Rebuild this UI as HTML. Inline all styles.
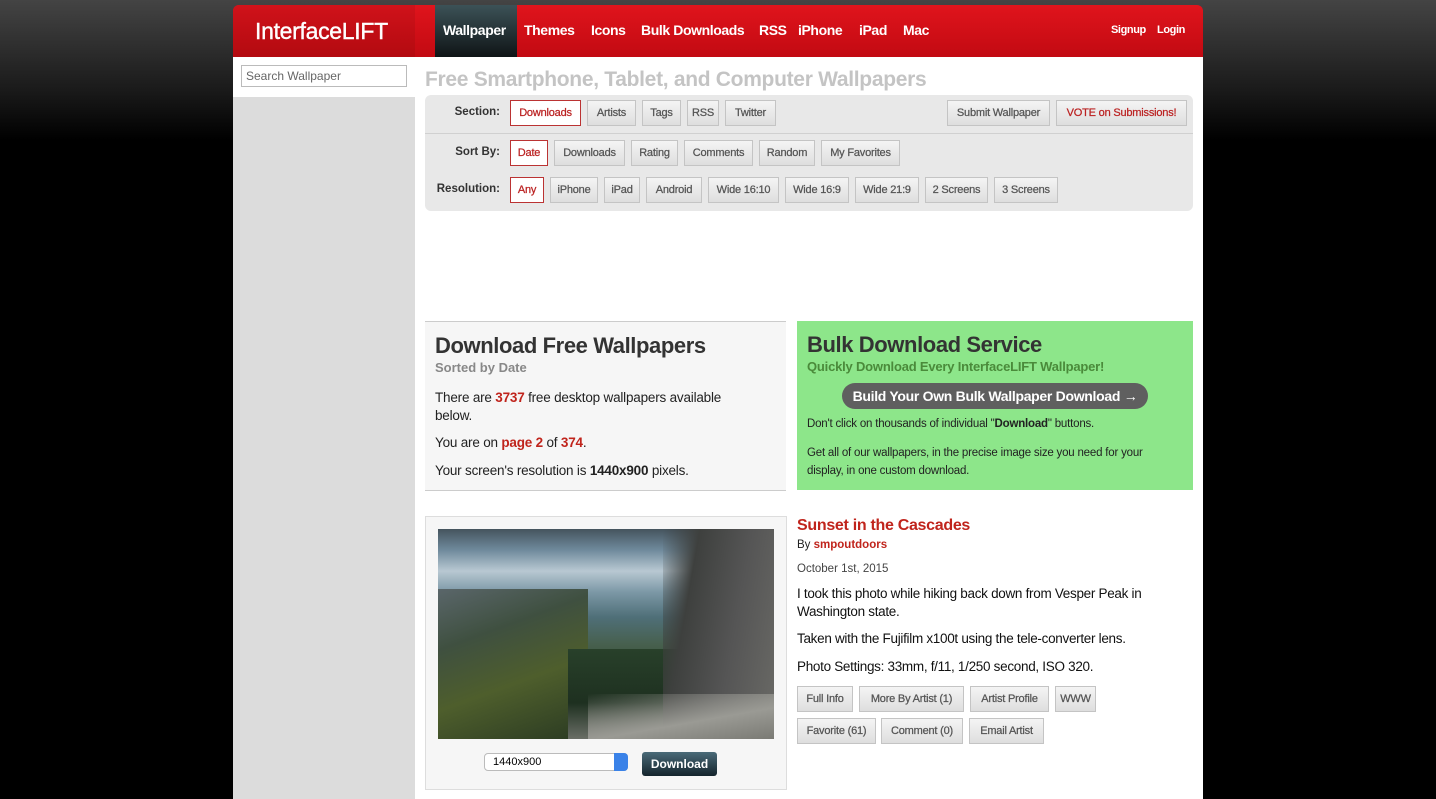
<!DOCTYPE html>
<html><head><meta charset="utf-8"><style>
*{margin:0;padding:0;box-sizing:border-box}
body{width:1436px;height:799px;overflow:hidden;background:linear-gradient(#444 0,#1a1a1a 90px,#000 140px,#000);font-family:"Liberation Sans",sans-serif;position:relative}
.a{position:absolute}
.hdr{left:233px;top:5px;width:970px;height:52px;background:linear-gradient(#e0141c,#c20a12);border-radius:6px 6px 0 0}
.logo{left:0;top:0;width:182px;height:52px;background:linear-gradient(#d0121a,#b30a10);border-radius:6px 0 0 0;color:#fff;font-size:23px;line-height:52px;padding-left:22px;letter-spacing:-.3px;-webkit-text-stroke:.4px #fff}
.nav{color:#fff;font-weight:bold;font-size:14px;top:17px;letter-spacing:-.4px}
.tab{left:202px;top:0;width:82px;height:52px;background:linear-gradient(#3c5257,#0f1416)}
.side{left:233px;top:57px;width:182px;height:742px;background:#dcdcdc}
.sbox{left:233px;top:57px;width:182px;height:40px;background:#fff}
.inp{left:241px;top:65px;width:166px;height:22px;border:1px solid #bbb;font-size:12px;color:#666;padding:3px 4px}
.main{left:415px;top:57px;width:788px;height:742px;background:#fff}
h1.a{left:425px;top:68px;font-size:21px;color:#c4c4c4;font-weight:bold;letter-spacing:-.3px}
.panel{left:425px;top:95px;width:768px;height:116px;background:#e8e8e8;border-radius:6px}
.lbl{font-size:11.5px;font-weight:bold;color:#333;text-align:right;width:80px}
.b{position:absolute;height:26px;border:1px solid #c4c4c4;background:linear-gradient(#f4f4f4,#dedede);font-size:11px;color:#555;text-align:center;line-height:25px;white-space:nowrap;letter-spacing:-.2px;-webkit-text-stroke:.25px #555}
.b.s{background:#fff;border-color:#b33;color:#b22;-webkit-text-stroke:.25px #b22}
.box1{left:425px;top:321px;width:361px;height:170px;background:#f6f6f6;border-top:1px solid #ccc;border-bottom:1px solid #ccc}
.box2{left:797px;top:321px;width:396px;height:169px;background:#8de68a}
.red{color:#c0241c;font-weight:bold}
p{margin:0}
</style></head><body>
<div class="a hdr">
<div class="a logo">InterfaceLIFT</div>
<div class="a tab"></div>
<div class="a nav" style="left:210px">Wallpaper</div>
<div class="a nav" style="left:291px">Themes</div>
<div class="a nav" style="left:358px">Icons</div>
<div class="a nav" style="left:408px">Bulk Downloads</div>
<div class="a nav" style="left:526px">RSS</div>
<div class="a nav" style="left:565px">iPhone</div>
<div class="a nav" style="left:626px">iPad</div>
<div class="a nav" style="left:670px">Mac</div>
<div class="a nav" style="left:878px;top:19px;font-size:11px">Signup</div>
<div class="a nav" style="left:924px;top:19px;font-size:11px">Login</div>
</div>
<div class="a side"></div><div class="a sbox"></div>
<div class="a inp">Search Wallpaper</div>
<div class="a main"></div>
<h1 class="a">Free Smartphone, Tablet, and Computer Wallpapers</h1>
<div class="a panel"><div class="a" style="left:0;top:38px;width:768px;height:1px;background:#d0d0d0"></div></div>
<div class="a lbl" style="left:420px;top:106px">Section:</div>
<div class="a lbl" style="left:420px;top:146px">Sort By:</div>
<div class="a lbl" style="left:420px;top:183px">Resolution:</div>
<div class="b s" style="left:510px;top:100px;width:71px">Downloads</div>
<div class="b" style="left:587px;top:100px;width:49px">Artists</div>
<div class="b" style="left:642px;top:100px;width:39px">Tags</div>
<div class="b" style="left:687px;top:100px;width:32px">RSS</div>
<div class="b" style="left:725px;top:100px;width:51px">Twitter</div>
<div class="b" style="left:947px;top:100px;width:103px">Submit Wallpaper</div>
<div class="b" style="left:1056px;top:100px;width:131px;color:#b22;-webkit-text-stroke:.25px #b22">VOTE on Submissions!</div>
<div class="b s" style="left:510px;top:140px;width:38px">Date</div>
<div class="b" style="left:554px;top:140px;width:71px">Downloads</div>
<div class="b" style="left:631px;top:140px;width:47px">Rating</div>
<div class="b" style="left:684px;top:140px;width:69px">Comments</div>
<div class="b" style="left:759px;top:140px;width:56px">Random</div>
<div class="b" style="left:821px;top:140px;width:79px">My Favorites</div>
<div class="b s" style="left:510px;top:177px;width:34px">Any</div>
<div class="b" style="left:550px;top:177px;width:48px">iPhone</div>
<div class="b" style="left:604px;top:177px;width:36px">iPad</div>
<div class="b" style="left:646px;top:177px;width:56px">Android</div>
<div class="b" style="left:708px;top:177px;width:71px">Wide 16:10</div>
<div class="b" style="left:785px;top:177px;width:64px">Wide 16:9</div>
<div class="b" style="left:855px;top:177px;width:64px">Wide 21:9</div>
<div class="b" style="left:925px;top:177px;width:63px">2 Screens</div>
<div class="b" style="left:994px;top:177px;width:64px">3 Screens</div>

<div class="a box1">
<div class="a" style="left:10px;top:11px;font-size:22px;font-weight:bold;color:#333;letter-spacing:-.4px">Download Free Wallpapers</div>
<div class="a" style="left:10px;top:38px;font-size:13px;font-weight:bold;color:#888">Sorted by Date</div>
<div class="a" style="left:10px;top:67px;width:320px;font-size:13.5px;color:#222;line-height:18px;letter-spacing:-.2px">There are <span class="red">3737</span> free desktop wallpapers available below.</div>
<div class="a" style="left:10px;top:113px;font-size:13.5px;color:#222;letter-spacing:-.2px">You are on <span class="red">page 2</span> of <span class="red">374</span>.</div>
<div class="a" style="left:10px;top:141px;font-size:13.5px;color:#222;letter-spacing:-.2px">Your screen's resolution is <b>1440x900</b> pixels.</div>
</div>
<div class="a box2">
<div class="a" style="left:10px;top:11px;font-size:22px;font-weight:bold;color:#333;letter-spacing:-.4px">Bulk Download Service</div>
<div class="a" style="left:10px;top:38px;font-size:13px;font-weight:bold;color:#4a8a3a;letter-spacing:-.2px">Quickly Download Every InterfaceLIFT Wallpaper!</div>
<div class="a" style="left:45px;top:62px;width:306px;height:26px;border-radius:13px;background:#5f5f5f;color:#fff;font-size:14px;font-weight:bold;text-align:center;line-height:26px;letter-spacing:-.3px">Build Your Own Bulk Wallpaper Download →</div>
<div class="a" style="left:10px;top:97px;font-size:11.5px;color:#222;letter-spacing:-.2px">Don't click on thousands of individual "<b>Download</b>" buttons.</div>
<div class="a" style="left:10px;top:123px;width:372px;font-size:11.5px;color:#222;line-height:18px;letter-spacing:-.2px">Get all of our wallpapers, in the precise image size you need for your display, in one custom download.</div>
</div>

<div class="a" style="left:425px;top:516px;width:362px;height:274px;background:#f6f6f6;border:1px solid #ddd"></div>
<div class="a" style="left:438px;top:529px;width:336px;height:210px;overflow:hidden;background:linear-gradient(#45545e 0%,#6f8a9c 10%,#b8c8d2 20%,#7c98a6 30%,#4f6f78 42%,#47604e 55%,#2e452c 72%,#5c6658 86%,#8e8e86 100%)">
<div class="a" style="left:0;top:60px;width:150px;height:150px;background:linear-gradient(160deg,#5a666a 0%,#3f5040 30%,#4e5e2c 60%,#2a3a22)"></div>
<div class="a" style="left:130px;top:120px;width:110px;height:90px;background:linear-gradient(#28402a,#1e3020 60%,#6a6e66)"></div>
<div class="a" style="left:225px;top:0;width:111px;height:210px;background:linear-gradient(100deg,rgba(60,60,60,0) 0%,#3e403e 25%,#555 60%,#6a6a66)"></div>
<div class="a" style="left:150px;top:165px;width:186px;height:45px;background:linear-gradient(170deg,rgba(140,140,134,0),#9a9a94 60%,#7a7a74)"></div>
</div>
<div class="a" style="left:484px;top:753px;width:144px;height:18px;border:1px solid #bbb;border-radius:4px;background:#fff;font-size:11px;line-height:16px;padding-left:8px">1440x900</div>
<div class="a" style="left:614px;top:753px;width:14px;height:18px;background:#3a82e8;border-radius:0 4px 4px 0"></div>
<div class="a" style="left:642px;top:752px;width:75px;height:24px;border-radius:3px;background:linear-gradient(#4a6a78,#14242c);color:#fff;font-size:12px;font-weight:bold;text-align:center;line-height:24px">Download</div>

<div class="a" style="left:797px;top:517px;font-size:16px;font-weight:bold;color:#c0241c;letter-spacing:-.3px">Sunset in the Cascades</div>
<div class="a" style="left:797px;top:539px;font-size:11.5px;color:#222">By <span class="red">smpoutdoors</span></div>
<div class="a" style="left:797px;top:563px;font-size:11.5px;color:#444">October 1st, 2015</div>
<div class="a" style="left:797px;top:585px;width:396px;font-size:13.5px;color:#111;line-height:18px;letter-spacing:-.3px">I took this photo while hiking back down from Vesper Peak in Washington state.</div>
<div class="a" style="left:797px;top:631px;font-size:13.5px;color:#111;letter-spacing:-.3px">Taken with the Fujifilm x100t using the tele-converter lens.</div>
<div class="a" style="left:797px;top:659px;font-size:13.5px;color:#111;letter-spacing:-.3px">Photo Settings: 33mm, f/11, 1/250 second, ISO 320.</div>
<div class="b" style="left:797px;top:686px;width:56px">Full Info</div>
<div class="b" style="left:859px;top:686px;width:105px">More By Artist (1)</div>
<div class="b" style="left:970px;top:686px;width:79px">Artist Profile</div>
<div class="b" style="left:1055px;top:686px;width:41px">WWW</div>
<div class="b" style="left:797px;top:718px;width:79px">Favorite (61)</div>
<div class="b" style="left:881px;top:718px;width:82px">Comment (0)</div>
<div class="b" style="left:969px;top:718px;width:75px">Email Artist</div>
</body></html>
